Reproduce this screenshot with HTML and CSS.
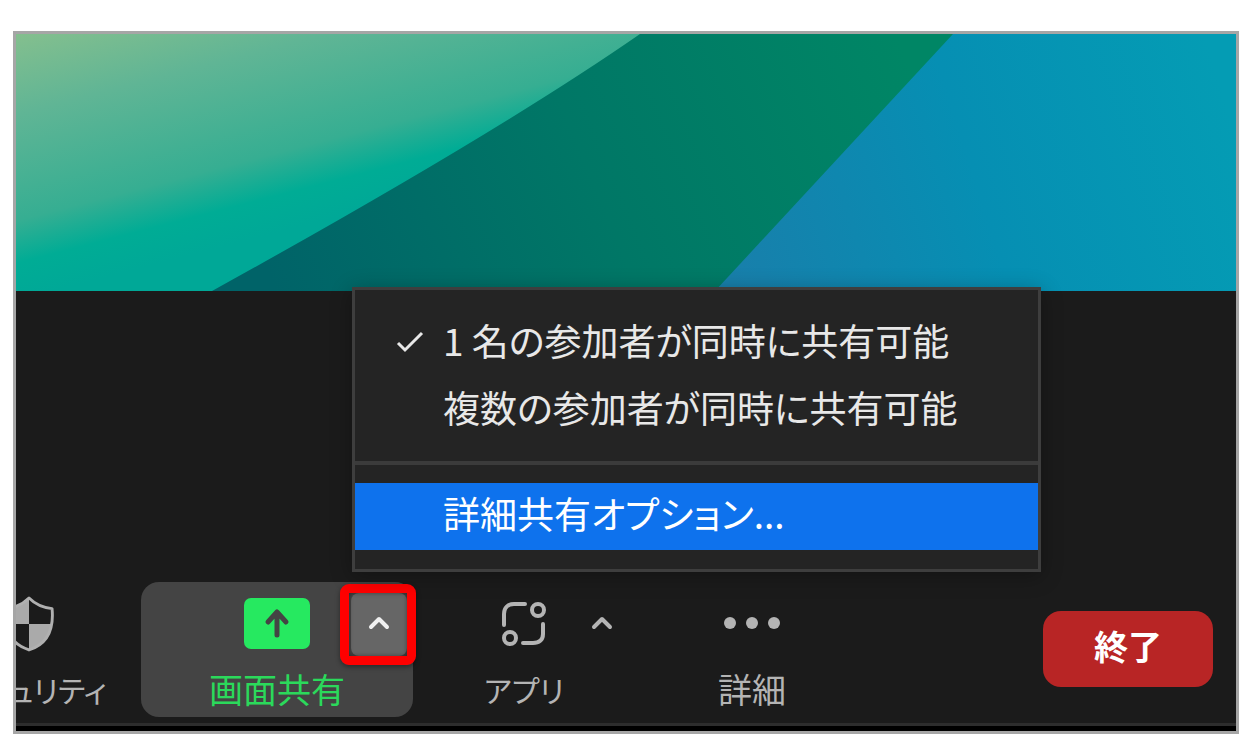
FILE: index.html
```html
<!DOCTYPE html>
<html lang="ja">
<head>
  <meta charset="UTF-8" />
  <meta name="viewport" content="width=device-width, initial-scale=1.0" />
  <title>画面共有</title>
  <link rel="stylesheet" href="styles.css">
</head>
<body>
  <main class="meeting">
    <svg class="wallpaper" viewBox="0 0 1220 257" preserveAspectRatio="none" aria-hidden="true">
      <defs>
        <linearGradient id="mint" gradientUnits="userSpaceOnUse" x1="0" y1="0" x2="65" y2="250">
          <stop offset="0" stop-color="#84bf8e" />
          <stop offset="0.3" stop-color="#60b595" />
          <stop offset="0.7" stop-color="#36ae92" />
          <stop offset="0.86" stop-color="#00ac95" />
          <stop offset="1" stop-color="#00a897" />
        </linearGradient>
        <linearGradient id="green" gradientUnits="userSpaceOnUse" x1="260" y1="257" x2="880" y2="0">
          <stop offset="0" stop-color="#006368" />
          <stop offset="0.5" stop-color="#007766" />
          <stop offset="1" stop-color="#008665" />
        </linearGradient>
        <linearGradient id="blue" gradientUnits="userSpaceOnUse" x1="720" y1="257" x2="1220" y2="100">
          <stop offset="0" stop-color="#187fab" />
          <stop offset="0.5" stop-color="#068fb3" />
          <stop offset="1" stop-color="#049cb4" />
        </linearGradient>
      </defs>
      <rect width="1220" height="257" fill="url(#mint)" />
      <path d="M624 0 Q480 100 196 257 H1220 V0 Z" fill="url(#green)" />
      <path d="M937 0 L699 257 H1220 V0 Z" fill="url(#blue)" />
    </svg>

    <div class="toolbar">
      <button class="tool security" type="button">
        <span class="tool-icon">
          <svg width="50" height="56" viewBox="0 0 52 58">
            <path d="M26 2 V29 H2 C1 23 1 18 2 13 C12 12 19 8 26 2 Z" fill="#aaa" />
            <path d="M26 29 H50 C48 42 39 52 26 56 Z" fill="#aaa" />
            <path d="M26 2 C33 9 40 12 50 13 C52 34 45 50 26 56 C7 50 0 34 2 13 C12 12 19 9 26 2 Z" fill="none" stroke="#b0b0b0" stroke-width="3" stroke-linejoin="round" />
          </svg>
        </span>
        <span class="tool-label kana">セキュリティ</span>
      </button>

      <div class="share-group">
        <button class="tool share" type="button">
          <span class="tool-icon">
            <svg width="66" height="51" viewBox="0 0 66 51">
              <rect width="66" height="51" rx="7" fill="#26e960" />
              <path d="M33 37 V15 M24 24 L33 14 L42 24" fill="none" stroke="#444" stroke-width="5" stroke-linecap="round" stroke-linejoin="round" />
            </svg>
          </span>
          <span class="tool-label">画面共有</span>
        </button>
        <div class="caret-wrap">
          <button class="caret active" type="button" aria-label="共有オプション" aria-expanded="true">
            <svg width="22" height="14" viewBox="0 0 22 14">
              <path d="M3 11 L11 3 L19 11" />
            </svg>
          </button>
          <span class="highlight"></span>
        </div>

        <div class="menu" role="menu">
          <button class="menu-item" type="button" role="menuitemradio" aria-checked="true">
            <svg class="check" width="28" height="22" viewBox="0 0 28 22">
              <path d="M2 12 L9 19 L26 2" />
            </svg>
            1 名の参加者が同時に共有可能
          </button>
          <button class="menu-item" type="button" role="menuitemradio" aria-checked="false">複数の参加者が同時に共有可能</button>
          <hr class="menu-line">
          <button class="menu-item selected" type="button" role="menuitem">詳細共有オプション...</button>
        </div>
      </div>

      <div class="apps-group">
        <button class="tool" type="button">
          <span class="tool-icon">
            <svg width="46" height="48" viewBox="0 0 46 48" fill="none" stroke="#b4b4b4" stroke-width="4" stroke-linecap="round">
              <path d="M24 4 H13 C7 4 3 8 3 14 V25" />
              <path d="M42 24 V34 C42 40 38 43 32 43 H22" />
              <circle cx="37" cy="10" r="6" />
              <circle cx="9" cy="38" r="6" />
            </svg>
          </span>
          <span class="tool-label kana">アプリ</span>
        </button>
        <button class="caret" type="button" aria-label="アプリのオプション">
          <svg width="22" height="14" viewBox="0 0 22 14">
            <path d="M3 11 L11 3 L19 11" />
          </svg>
        </button>
      </div>

      <button class="tool more" type="button">
        <span class="tool-icon">
          <svg width="58" height="12" viewBox="0 0 58 12" fill="#b4b4b4">
            <circle cx="7" cy="6" r="6" />
            <circle cx="29" cy="6" r="6" />
            <circle cx="51" cy="6" r="6" />
          </svg>
        </span>
        <span class="tool-label">詳細</span>
      </button>

      <button class="end" type="button">終了</button>
    </div>
  </main>
</body>
</html>
```
FILE: styles.css
```css
* {
  margin: 0;
  padding: 0;
  box-sizing: border-box;
}
body {
  background-color: #fff;
  font-family: 'Noto Sans CJK JP', sans-serif;
  font-feature-settings: "palt";
  padding: 31px 9px 13px 13px;
}
button {
  background: none;
  border: none;
  font: inherit;
  font-feature-settings: inherit;
  color: inherit;
  white-space: nowrap;
  cursor: pointer;
}
.meeting {
  display: flex;
  flex-direction: column;
  min-height: calc(100vh - 44px);
  padding-bottom: 5px;
  background-color: #000;
  border: 3px solid #a6a6a6;
  overflow: hidden;
}
.wallpaper {
  display: block;
  width: 100%;
  height: 257px;
}
.toolbar {
  flex: 1;
  display: flex;
  align-items: flex-end;
  padding: 0 23px 6px 0;
  background-color: #1b1b1b;
  border-bottom: 3px solid #2d2d2d;
  color: #b4b4b4;
}
.tool {
  display: flex;
  flex-direction: column;
  align-items: center;
  width: 100px;
  padding: 13px 0 8px;
}
.tool-icon {
  display: flex;
  align-items: center;
  justify-content: center;
  height: 57px;
  margin-bottom: 17px;
}
.tool-label {
  font-size: 34px;
  line-height: 40px;
}
.tool-label.kana {
  font-size: 30px;
}
/* starts outside the window, the left part is cut off */
.security {
  width: 180px;
  margin-left: -77px;
  margin-right: 22px;
}
.share-group {
  position: relative;
  display: grid;
  grid-template-columns: 62px 1fr 62px;
  width: 272px;
  background-color: #444;
  border-radius: 18px;
}
.share {
  grid-column: 2;
  width: 100%;
  color: #2bd95b;
}
.caret {
  display: flex;
  align-items: center;
  justify-content: center;
  width: 56px;
  height: 63px;
  padding-bottom: 4px;
  border-radius: 8px;
}
.caret path {
  fill: none;
  stroke: #b4b4b4;
  stroke-width: 4;
  stroke-linecap: round;
  stroke-linejoin: round;
}
.caret.active {
  background-color: #666;
}
.caret.active path {
  stroke: #f0f0f0;
}
.caret-wrap {
  position: relative;
  width: 56px;
  height: 63px;
  margin-top: 11px;
}
.highlight {
  position: absolute;
  inset: -9px -9px -9px -11px;
  border: 9px solid #f00;
  border-radius: 9px;
  box-shadow: 0 2px 5px rgba(0, 0, 0, 0.4), inset 0 0 4px rgba(0, 0, 0, 0.4);
  pointer-events: none;
}
.apps-group {
  display: flex;
  margin-left: 61px;
}
.apps-group .caret {
  margin-top: 11px;
}
.more {
  margin-left: 72px;
}
.more .tool-icon {
  align-items: flex-start;
  padding-top: 22px;
}
.end {
  width: 170px;
  height: 76px;
  margin: 0 0 30px auto;
  padding-bottom: 8px;
  background-color: #b82525;
  border-radius: 18px;
  color: #fff;
  font-size: 34px;
  font-weight: bold;
}
.menu {
  position: absolute;
  left: 211px;
  bottom: calc(100% + 10px);
  width: 689px;
  padding: 20px 0 19px;
  background-color: #242424;
  border: 3px solid #3e3e3e;
  box-shadow: 0 4px 20px rgba(0, 0, 0, 0.3);
  color: #e8e8e8;
}
.menu-item {
  position: relative;
  display: block;
  width: 100%;
  padding: 0 0 6px 88px;
  font-size: 37px;
  line-height: 61px;
  text-align: left;
}
.menu-item.selected {
  background-color: #0e72ed;
  color: #fff;
}
.menu-line {
  height: 4px;
  margin: 17px 0 18px;
  background-color: #3b3b3b;
  border: none;
}
.check {
  position: absolute;
  left: 41px;
  top: 21px;
}
.check path {
  fill: none;
  stroke: #e8e8e8;
  stroke-width: 3;
}
```
